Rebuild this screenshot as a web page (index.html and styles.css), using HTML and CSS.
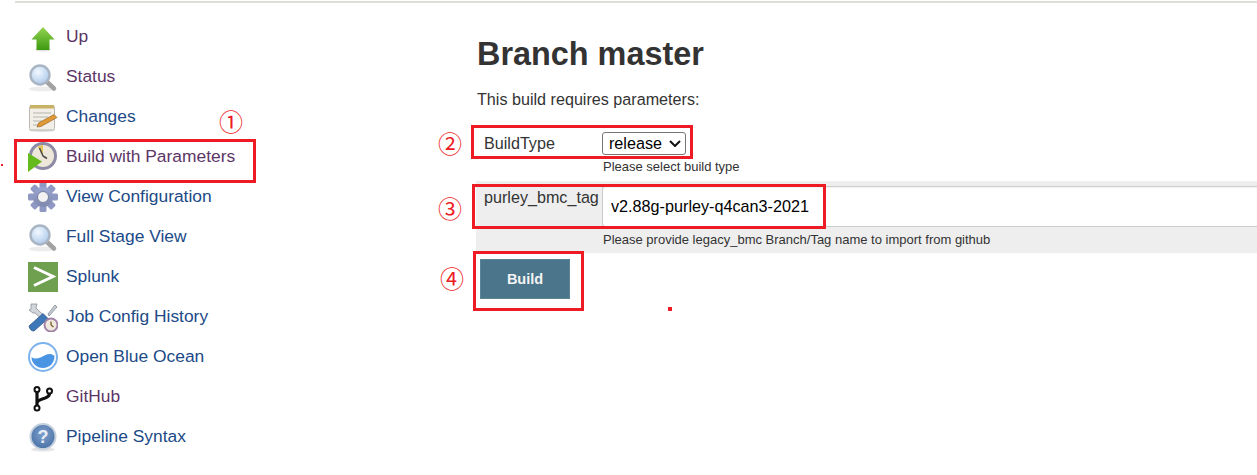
FILE: index.html
```html
<!DOCTYPE html>
<html lang="en">
<head>
<meta charset="utf-8">
<title>Branch master</title>
<link rel="stylesheet" href="styles.css">
</head>
<body>
<svg class="defs" width="0" height="0" aria-hidden="true">
  <defs>
    <linearGradient id="gArrow" x1="0" y1="0" x2="0" y2="1"><stop offset="0" stop-color="#93d450"/><stop offset="1" stop-color="#3d9a10"/></linearGradient>
    <radialGradient id="gLens" cx=".4" cy=".35" r=".7"><stop offset="0" stop-color="#f2f8ff"/><stop offset="1" stop-color="#a9c8ea"/></radialGradient>
    <linearGradient id="gGear" x1="0" y1="0" x2="0" y2="1"><stop offset="0" stop-color="#9aa6d2"/><stop offset="1" stop-color="#7f88ad"/></linearGradient>
    <radialGradient id="gHelp" cx=".5" cy=".4" r=".6"><stop offset="0" stop-color="#7ea0cc"/><stop offset="1" stop-color="#4a72a6"/></radialGradient>
    <symbol id="iLens" viewBox="0 0 30 30">
      <ellipse cx="14" cy="27" rx="13" ry="2.500" fill="#ececec"/>
      <path d="M19 20l7 6.500" stroke="#a2a2a2" stroke-width="4.500" stroke-linecap="round"/>
      <circle cx="12" cy="13" r="9.500" fill="url(#gLens)" stroke="#a9b5c2" stroke-width="2.400"/>
    </symbol>
  </defs>
</svg>

<div class="topline"></div>
<div class="page">
  <nav class="side">
    <a class="task visited" href="#up"><svg class="icon" viewBox="0 0 30 30"><ellipse cx="15" cy="28" rx="8" ry="1.500" fill="#e2e2e2"/><path d="M15 5L26.500 17.500H21.500V28H8.500V17.500H3.500Z" fill="url(#gArrow)"/></svg>Up</a>
    <a class="task visited" href="#status"><svg class="icon"><use href="#iLens"/></svg>Status</a>
    <a class="task" href="#changes"><svg class="icon" viewBox="0 0 30 30"><ellipse cx="14" cy="28.500" rx="13" ry="1.500" fill="#dedede"/><rect x="1.500" y="4" width="25" height="24" rx="1.500" fill="#f1efe8" stroke="#b9b9b1"/><rect x="2" y="3" width="24" height="3.500" fill="#c9b266"/><path d="M5 11h18M5 15h15M5 19h9M5 23h6" stroke="#c8c8c0" stroke-width="1.400"/><path d="M9 25l1.500-4L26 12.500l3 3L13 24.500Z" fill="#e09a35" stroke="#8f5a1f" stroke-width=".6"/></svg>Changes</a>
    <a class="task visited" href="#build"><svg class="icon" viewBox="0 0 30 30"><circle cx="15" cy="14" r="14" fill="#8d8aa6"/><circle cx="15" cy="14" r="11" fill="#ede7da"/><path d="M15 14L9.500 4.500A11 11 0 0 1 15 3Z" fill="#e3c65a"/><path d="M15 14L11.500 6M15 14l4 2.500" stroke="#4a4a4a" stroke-width="1.500"/><path d="M0 11L14 19.500 0 30Z" fill="#66bb1c"/></svg>Build with Parameters</a>
    <a class="task" href="#config"><svg class="icon" viewBox="0 0 30 30"><g fill="#8f99c4"><rect x="11.500" y="0" width="7" height="30" rx="1.500"/><rect x="11.500" y="0" width="7" height="30" rx="1.500" transform="rotate(45 15 15)"/><rect x="11.500" y="0" width="7" height="30" rx="1.500" transform="rotate(90 15 15)"/><rect x="11.500" y="0" width="7" height="30" rx="1.500" transform="rotate(135 15 15)"/></g><circle cx="15" cy="15" r="10" fill="url(#gGear)"/><circle cx="15" cy="15" r="5.500" fill="#f2f2f2" stroke="#767f9f"/></svg>View Configuration</a>
    <a class="task" href="#stage"><svg class="icon"><use href="#iLens"/></svg>Full Stage View</a>
    <a class="task" href="#splunk"><svg class="icon" viewBox="0 0 30 30"><rect width="30" height="30" fill="#6fa04f"/><path d="M6 5.500L25 14.500 6 23.500" fill="none" stroke="#fff" stroke-width="3"/></svg>Splunk</a>
    <a class="task" href="#history"><svg class="icon" viewBox="0 0 30 30"><path d="M3 2l6 0-1 4 2 2 14 13-3 3L7 11l-2 0-4-3 2-1Z" fill="#d2d5da" stroke="#8b8f98" stroke-width=".8"/><path d="M20 12l7-9 2 2-8 9Z" fill="#c8ccd2" stroke="#7f8a96" stroke-width=".8"/><path d="M1 24L15 11.500l5 5L6 29Q2 29 1 24Z" fill="#3f78b8" stroke="#2d5688" stroke-width=".8"/><circle cx="23" cy="23" r="6.500" fill="#efe9e0" stroke="#a184a8" stroke-width="2"/><path d="M23 23v-3.500M23 23l2.500 2" stroke="#7a5a20" stroke-width="1.300"/></svg>Job Config History</a>
    <a class="task" href="#ocean"><svg class="icon" viewBox="0 0 30 30"><circle cx="15" cy="15" r="14" fill="#fff" stroke="#7cb2ec" stroke-width="2"/><path d="M3.500 15c4 3 8 1 12-1s7-3 11 0c0 7-5 12-11.500 12S3.500 21 3.500 15Z" fill="#4a94e4"/></svg>Open Blue Ocean</a>
    <a class="task visited" href="#github"><svg class="icon" viewBox="0 0 30 30"><g fill="none" stroke="#111"><g stroke-width="2"><circle cx="9" cy="7.500" r="2.500"/><circle cx="21.500" cy="9" r="2.500"/><circle cx="9" cy="26" r="2.500"/></g><path d="M9 10V23.500M21.500 11.500c0 6.500-12.500 4-12.500 10" stroke-width="3.200"/></g></svg>GitHub</a>
    <a class="task" href="#syntax"><svg class="icon" viewBox="0 0 30 30"><ellipse cx="15" cy="27.500" rx="12" ry="2" fill="#e6e6e6"/><circle cx="15" cy="14.500" r="12.500" fill="url(#gHelp)" stroke="#c5d0dd" stroke-width="2"/><text class="help" x="15" y="20.500" text-anchor="middle">?</text></svg>Pipeline Syntax</a>
  </nav>

  <main class="main">
    <h1 class="title">Branch master</h1>
    <p class="intro">This build requires parameters:</p>
    <form class="form">
      <div class="param">
        <label class="name">BuildType</label>
        <div class="value">
          <select class="select"><option>release</option></select>
          <svg class="chev" viewBox="0 0 12 7"><path d="M1 1l5 5 5-5" fill="none" stroke="#111" stroke-width="2"/></svg>
        </div>
        <div class="desc">Please select build type</div>
      </div>
      <div class="param band">
        <label class="name">purley_bmc_tag</label>
        <div class="value"><input class="input" type="text" value="v2.88g-purley-q4can3-2021"></div>
        <div class="desc">Please provide legacy_bmc Branch/Tag name to import from github</div>
      </div>
      <button class="build" type="button">Build</button>
    </form>
  </main>
</div>

<div class="mark box1"></div>
<div class="mark box2"></div>
<div class="mark box3"></div>
<div class="mark box4"></div>
<span class="num n1">①</span>
<span class="num n2">②</span>
<span class="num n3">③</span>
<span class="num n4">④</span>
<div class="dot d1"></div>
<div class="dot d2"></div>
</body>
</html>
```
FILE: styles.css
```css
html, body { margin: 0; padding: 0; }
body {
  position: relative;
  width: 1257px;
  height: 475px;
  overflow: hidden;
  background: #fff;
  color: #333;
  font-family: "Liberation Sans", Arial, sans-serif;
}
.defs { position: absolute; }
.topline {
  height: 2px;
  margin: 1px 0 0 15px;
  background: #dcdfd6;
}
.page {
  display: grid;
  grid-template-columns: 476px 1fr;
}
.side {
  display: flex;
  flex-direction: column;
  padding: 13px 0 0 28px;
}
.task {
  display: flex;
  align-items: center;
  gap: 8px;
  height: 40px;
  font-size: 17.400px;
  color: #204a87;
  text-decoration: none;
}
.task.visited { color: #5c3566; }
.icon { width: 30px; height: 30px; margin-top: 2px; flex: none; }
.help { font: bold 18px "Liberation Sans", Arial, sans-serif; fill: #e8eef6; }
.main { padding-top: 33px; }
.title {
  margin: 0;
  padding-left: 1px;
  font-size: 32.400px;
  line-height: 37px;
  font-weight: 700;
  color: #333;
}
.intro {
  margin: 17px 0 0;
  padding-left: 1px;
  font-size: 16.150px;
  line-height: 18px;
}
.form { margin-top: 14px; }
.param {
  display: grid;
  grid-template-columns: 126px 1fr;
  padding-top: 10px;
}
.name {
  padding-left: 8px;
  font-size: 16.150px;
  line-height: 22px;
  white-space: nowrap;
  align-self: start;
}
.value { position: relative; }
.select {
  display: block;
  width: 84px;
  height: 23px;
  margin: 0;
  padding: 0 0 2px 6px;
  font: 16.150px "Liberation Sans", Arial, sans-serif;
  color: #000;
  background: #fff;
  border: 1px solid #767676;
  border-radius: 3px;
  appearance: none;
}
.chev {
  position: absolute;
  left: 67px;
  top: 8px;
  width: 12px;
  height: 7px;
  pointer-events: none;
}
.desc {
  grid-column: 2;
  padding: 2px 0 0 1px;
  font-size: 13px;
  line-height: 20px;
}
.band {
  margin-top: 4px;
  padding-top: 5px;
  height: 67px;
  background: #eee;
}
.input {
  display: block;
  box-sizing: border-box;
  width: 100%;
  height: 41px;
  padding: 0 8px;
  font: 16.200px "Liberation Sans", Arial, sans-serif;
  color: #000;
  background: #fff;
  border: 1px solid #ccc;
  border-right: 0;
  border-radius: 3px 0 0 3px;
  box-shadow: inset 0 1px 2px rgba(0,0,0,.06);
}
.band .desc { padding-top: 0; }
.build {
  display: block;
  width: 90px;
  height: 40px;
  margin: 6px 0 0 4px;
  padding: 0;
  font: 700 14.500px "Liberation Sans", Arial, sans-serif;
  color: #f4f4f4;
  background: #4b758b;
  border: 1px solid #5d8396;
}
.mark {
  position: absolute;
  box-sizing: border-box;
  border: 3px solid #ed1c24;
}
.box1 { left: 14px; top: 139px; width: 242px; height: 44px; }
.box2 { left: 471px; top: 125px; width: 222px; height: 34px; }
.box3 { left: 472px; top: 184px; width: 354px; height: 45px; }
.box4 { left: 473px; top: 251px; width: 111px; height: 60px; }
.num {
  position: absolute;
  width: 24px;
  height: 24px;
  font: 24px/24px "Noto Sans CJK SC", sans-serif;
  text-align: center;
  color: #ed1c24;
}
.n1 { left: 219px; top: 109px; }
.n2 { left: 438px; top: 131px; }
.n3 { left: 438px; top: 196px; }
.n4 { left: 440px; top: 266px; }
.dot { position: absolute; background: #ed1c24; }
.d1 { left: 1px; top: 164px; width: 2px; height: 2px; }
.d2 { left: 668px; top: 307px; width: 4px; height: 4px; }
```
